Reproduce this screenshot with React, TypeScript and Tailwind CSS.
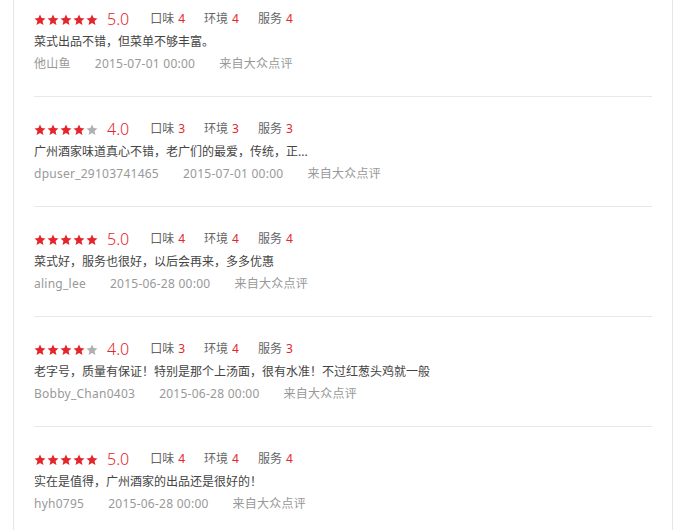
const reviews = [
  { stars: 5, score: '5.0', taste: 4, env: 4, service: 4, text: '菜式出品不错，但菜单不够丰富。', user: '他山鱼', date: '2015-07-01 00:00' },
  { stars: 4, score: '4.0', taste: 3, env: 3, service: 3, text: '广州酒家味道真心不错，老广们的最爱，传统，正...', user: 'dpuser_29103741465', date: '2015-07-01 00:00' },
  { stars: 5, score: '5.0', taste: 4, env: 4, service: 4, text: '菜式好，服务也很好，以后会再来，多多优惠', user: 'aling_lee', date: '2015-06-28 00:00' },
  { stars: 4, score: '4.0', taste: 3, env: 4, service: 3, text: '老字号，质量有保证！特别是那个上汤面，很有水准！不过红葱头鸡就一般', user: 'Bobby_Chan0403', date: '2015-06-28 00:00' },
  { stars: 5, score: '5.0', taste: 4, env: 4, service: 4, text: '实在是值得，广州酒家的出品还是很好的！', user: 'hyh0795', date: '2015-06-28 00:00' },
]

function Star({ on }: { on: boolean }) {
  return (
    <svg width="12" height="12" viewBox="0 0 24 24" className={on ? 'fill-[#e4262c]' : 'fill-[#b0b0b0]'}>
      <path d="M12 1l3.2 7.2 7.8.7-5.9 5.2 1.8 7.7L12 17.8l-6.9 4 1.8-7.7L1 8.9l7.8-.7z" />
    </svg>
  )
}

function Sub({ label, value }: { label: string; value: number }) {
  return (
    <span className="text-[#666]">
      {label}
      <span className="ml-[4px] text-[#e4262c]">{value}</span>
    </span>
  )
}

export default function App() {
  return (
    <div className="h-[530px] overflow-hidden bg-white font-['Noto_Sans','Noto_Sans_CJK_SC',sans-serif]">
      <div className="ml-[13px] w-[660px] h-full border-l border-r border-[#e6e6e6] px-5">
        {reviews.map((r, i) => (
          <div key={i} className={`border-b border-[#e8e8e8] pb-[21px] ${i === 0 ? 'pt-[9px]' : 'pt-[22px]'}`}>
            <div className="flex h-[20px] items-center text-[12px]">
              <div className="mt-[1px] flex gap-[1px]">
                {[0, 1, 2, 3, 4].map((s) => (
                  <Star key={s} on={s < r.stars} />
                ))}
              </div>
              <span className="ml-[9px] mr-[21px] text-[16px] font-light text-[#e4262c]">{r.score}</span>
              <div className="flex gap-[19px]">
                <Sub label="口味" value={r.taste} />
                <Sub label="环境" value={r.env} />
                <Sub label="服务" value={r.service} />
              </div>
            </div>
            <p className="mt-[2px] text-[12px] leading-[22px] text-[#444]">{r.text}</p>
            <div className="flex gap-[24px] text-[12px] leading-[22px] tracking-[0.25px] text-[#999]">
              <span>{r.user}</span>
              <span>{r.date}</span>
              <span>来自大众点评</span>
            </div>
          </div>
        ))}
      </div>
    </div>
  )
}
